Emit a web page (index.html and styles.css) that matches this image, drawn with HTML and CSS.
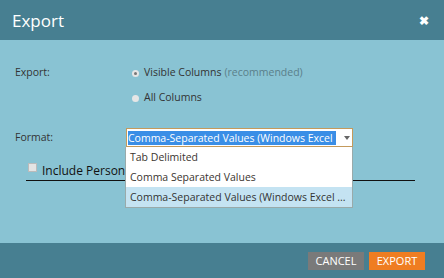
FILE: index.html
```html
<!DOCTYPE html>
<html lang="en">
<head>
  <meta charset="UTF-8">
  <title>Export</title>
  <link rel="stylesheet" href="styles.css">
</head>
<body>

  <div class="dialog">
    <div class="header">
      <span class="title">Export</span>
      <span class="close">&#10006;</span>
    </div>

    <div class="content">
      <div class="row">
        <div class="label">Export:</div>
        <div class="options">
          <div class="radio-line"><span class="radio checked"></span>Visible Columns <span class="muted">(recommended)</span></div>
          <div class="radio-line"><span class="radio"></span>All Columns</div>
        </div>
      </div>

      <div class="row format-row">
        <div class="label">Format:</div>
        <div class="select-wrap">
          <div class="select">
            <span class="selected-text">Comma-Separated Values (Windows Excel</span>
            <span class="arrow"></span>
          </div>
          <div class="dropdown">
            <div class="item">Tab Delimited</div>
            <div class="item">Comma Separated Values</div>
            <div class="item active">Comma-Separated Values (Windows Excel ...</div>
          </div>
        </div>
      </div>

      <div class="check-row">
        <span class="checkbox"></span>Include Personal Information
      </div>
    </div>

    <div class="footer">
      <button class="btn cancel">CANCEL</button>
      <button class="btn export">EXPORT</button>
    </div>
  </div>

</body>
</html>
```

FILE: styles.css
```css
body {
  margin: 0;
  font-family: "Open Sans", sans-serif;
  font-size: 10.5px;
  color: #333;
}

.dialog {
  width: 444px;
  height: 278px;
  display: flex;
  flex-direction: column;
}

.header {
  height: 40px;
  background-color: #477f91;
  display: flex;
  align-items: center;
  justify-content: space-between;
  padding: 0 15px 0 12px;
  color: #fff;
}

.title {
  font-size: 17px;
}

.close {
  font-size: 12px;
  font-weight: bold;
}

.content {
  height: 203px;
  background-color: #89c3d3;
  padding: 22px 0 0 15px;
  box-sizing: border-box;
}

.row {
  display: flex;
}

.label {
  width: 116px;
  line-height: 20px;
}

.radio-line {
  display: flex;
  align-items: center;
  height: 20px;
  margin-bottom: 5px;
  padding-left: 1px;
  white-space: nowrap;
}

.radio {
  width: 7px;
  height: 7px;
  border-radius: 50%;
  background-color: #e6e6e6;
  margin-right: 5px;
  margin-top: 2px;
  position: relative;
}

.radio.checked::after {
  content: "";
  position: absolute;
  left: 2px;
  top: 2px;
  width: 3px;
  height: 3px;
  border-radius: 50%;
  background-color: #777;
}

.muted {
  color: #5a7f8a;
  margin-left: 3px;
}

.format-row {
  margin-top: 16px;
}

.format-row .label {
  line-height: 19px;
}

.select-wrap {
  position: relative;
  margin-left: -5px;
}

.select {
  width: 227px;
  height: 19px;
  box-sizing: border-box;
  border: 1px solid #c49a5c;
  background-color: #fff;
  display: flex;
  align-items: center;
  padding-left: 1px;
  white-space: nowrap;
}

.selected-text {
  background-color: #3a8ee6;
  color: #fff;
  line-height: 14px;
  padding-right: 3px;
}

.arrow {
  margin-left: 8px;
  border-left: 3px solid transparent;
  border-right: 3px solid transparent;
  border-top: 4px solid #666;
}

.dropdown {
  position: absolute;
  left: -1px;
  top: 19px;
  width: 228px;
  background-color: #fff;
  border: 1px solid #9aa;
  border-top: none;
  box-sizing: border-box;
}

.item {
  height: 20px;
  line-height: 20px;
  padding-left: 4px;
  color: #3b3530;
  white-space: nowrap;
  overflow: hidden;
}

.item.active {
  background-color: #c4e3f2;
  color: #333;
}

.check-row {
  margin: 13px 29px 0 11px;
  border-bottom: 1px solid #111;
  height: 20px;
  display: flex;
  align-items: center;
  font-size: 12px;
  color: #111;
  white-space: nowrap;
}

.checkbox {
  width: 7px;
  height: 7px;
  background-color: #e4e4e4;
  border: 1px solid #bbb;
  margin: 0 5px 6px 2px;
}

.footer {
  height: 35px;
  background-color: #477f91;
  display: flex;
  justify-content: flex-end;
  align-items: center;
  gap: 5px;
  padding-right: 19px;
}

.btn {
  height: 18px;
  width: 56px;
  border: none;
  color: #fff;
  font-family: "Open Sans", sans-serif;
  font-size: 11px;
  padding: 0;
  cursor: pointer;
}

.btn.cancel {
  background-color: #7a7a7a;
}

.btn.export {
  background-color: #ef7d22;
}
```
